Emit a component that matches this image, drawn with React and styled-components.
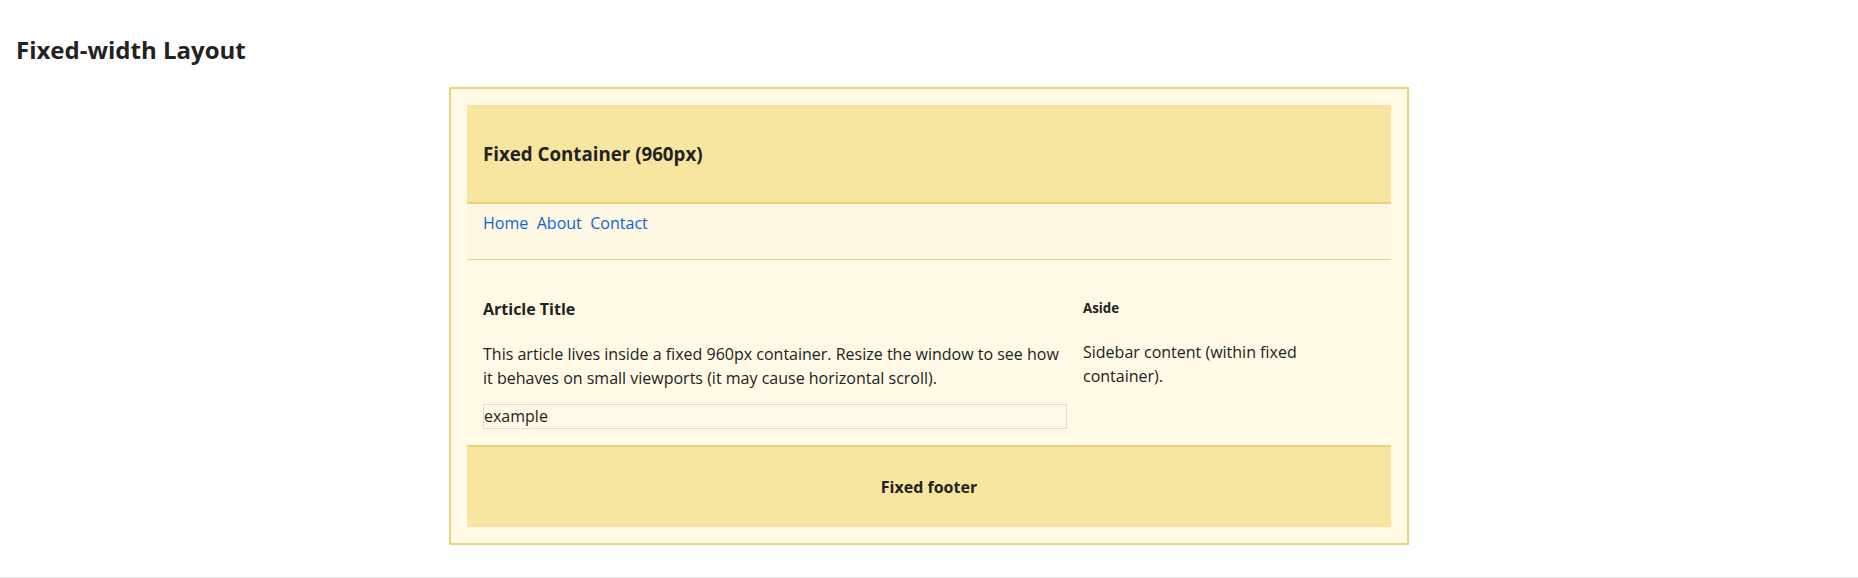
import React from 'react'
import styled, { createGlobalStyle } from 'styled-components'

const GlobalStyle = createGlobalStyle`
  html, body {
    margin: 0;
    padding: 0;
    background: #fff;
  }
  body {
    font-family: "Open Sans", "Noto Sans", sans-serif;
    font-size: 16px;
    line-height: 1.5;
    color: #222;
  }
  * {
    box-sizing: border-box;
  }
`

const Page = styled.div`
  padding: 0 16px 32px;
  border-bottom: 1px solid #e6e6e6;
`

const PageTitle = styled.h1`
  font-size: 24px;
  font-weight: 700;
  line-height: 36px;
  margin: 0;
  padding: 32px 0 19px;
`

const FixedContainer = styled.div`
  width: 960px;
  margin: 0 auto;
  padding: 16px;
  background: #fff9e6;
  border: 2px solid #e6d478;
`

const Header = styled.header`
  background: #f8e6a0;
  border-bottom: 2px solid #e6d478;
  padding: 34.5px 16px;
`

const HeaderTitle = styled.h2`
  margin: 0;
  font-size: 18.72px;
  line-height: 28px;
  font-weight: 700;
`

const Nav = styled.nav`
  background: #fef7e4;
  border-bottom: 1px solid #e8d98a;
  padding: 7px 16px 24px;
`

const NavList = styled.ul`
  display: flex;
  gap: 8.5px;
  list-style: none;
  margin: 0;
  padding: 0;
`

const NavLink = styled.a`
  color: #0c66d4;
  text-decoration: none;
`

const Main = styled.main`
  display: grid;
  grid-template-columns: 2fr 1fr;
  gap: 16px;
  padding: 16px;
  align-items: start;
`

const Article = styled.article``

const ArticleTitle = styled.h4`
  font-size: 16px;
  font-weight: 700;
  margin: 21px 0 21px;
`

const Paragraph = styled.p`
  margin: 0 0 14px;
`

const TextInput = styled.input`
  display: block;
  width: 100%;
  font: inherit;
  font-size: 16px;
  line-height: 21px;
  color: #222;
  padding: 1px 0;
  background: transparent;
  border: 1px solid #dcdcdc;
  outline: none;
`

const Aside = styled.aside``

const AsideTitle = styled.h5`
  font-size: 13.28px;
  font-weight: 700;
  line-height: 20px;
  margin: 22px 0 22px;
`

const Footer = styled.footer`
  background: #f8e6a0;
  border-top: 2px solid #e6d478;
  padding: 28px 16px;
  text-align: center;
  font-weight: 700;
`

export default function App() {
  return (
    <>
      <GlobalStyle />
      <Page>
        <PageTitle>Fixed-width Layout</PageTitle>
        <FixedContainer>
          <Header>
            <HeaderTitle>Fixed Container (960px)</HeaderTitle>
          </Header>
          <Nav>
            <NavList>
              <li><NavLink href="#">Home</NavLink></li>
              <li><NavLink href="#">About</NavLink></li>
              <li><NavLink href="#">Contact</NavLink></li>
            </NavList>
          </Nav>
          <Main>
            <Article>
              <ArticleTitle>Article Title</ArticleTitle>
              <Paragraph>
                This article lives inside a fixed 960px container. Resize the window to see how it behaves on small viewports (it may cause horizontal scroll).
              </Paragraph>
              <TextInput defaultValue="example" />
            </Article>
            <Aside>
              <AsideTitle>Aside</AsideTitle>
              <Paragraph>Sidebar content (within fixed container).</Paragraph>
            </Aside>
          </Main>
          <Footer>Fixed footer</Footer>
        </FixedContainer>
      </Page>
    </>
  )
}
